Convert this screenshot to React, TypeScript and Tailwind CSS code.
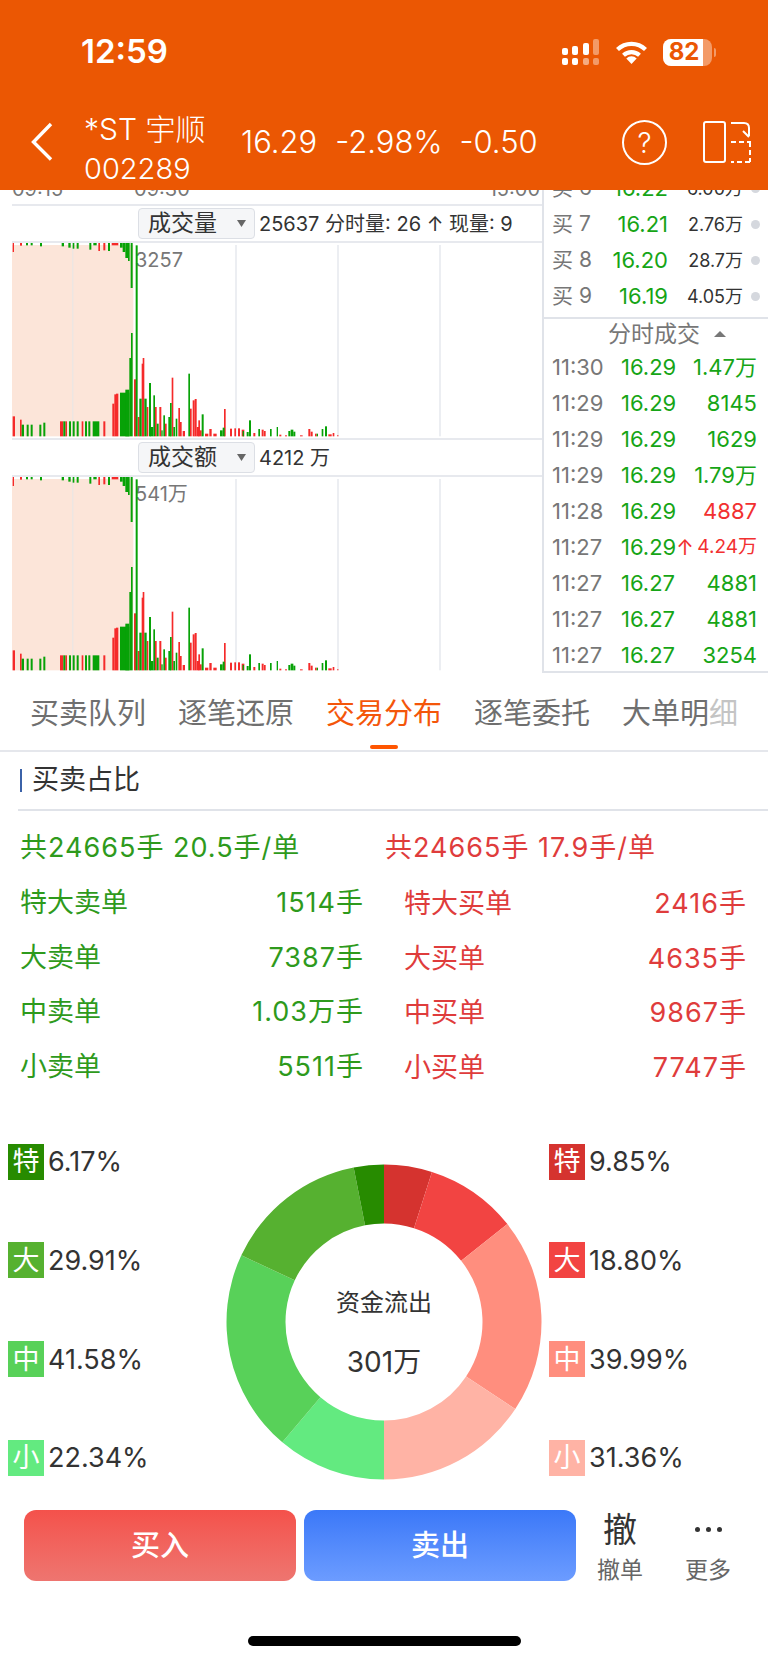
const GREEN = "text-[#16a516]";
const RED_BARS = [[38,7,678],[60,5,688],[180,10,693],[196,5,693],[245,5,693],[310,6,693],[337,6,640],[343,5,612],[348,7,610],[402,6,567],[413,6,680],[425,5,520],[428,5,503],[440,5,650],[465,5,650],[478,6,650],[495,5,700],[515,5,562],[535,5,653],[540,5,695],[548,7,722],[570,5,655],[578,6,630],[584,6,626],[590,8,710],[595,5,690],[600,5,720],[615,10,730],[628,7,716],[640,10,730],[672,5,656],[690,6,715],[703,5,714],[714,6,714],[725,8,718],[760,6,728],[785,6,718],[792,5,722],[838,6,733],[855,6,735],[900,8,735],[925,6,716],[932,6,724],[945,5,730],[985,10,732],[998,5,728],[1012,3,734]];
const GREEN_BARS = [[65,7,703],[80,6,703],[92,6,703],[118,6,703],[130,6,697],[190,6,693],[207,6,693],[218,6,693],[230,6,693],[255,6,693],[265,6,693],[278,20,693],[360,28,607],[376,12,598],[388,5,503],[393,5,428],[407,6,165],[418,7,625],[433,7,625],[447,6,578],[451,9,710],[460,5,615],[470,6,700],[484,4,720],[490,5,675],[505,7,680],[510,5,638],[520,5,710],[527,5,685],[565,5,550],[605,6,672],[660,8,720],[668,6,712],[728,4,722],[740,6,725],[747,6,690],[775,5,716],[810,5,716],[830,4,710],[865,6,722],[872,8,718],[880,6,724],[950,4,730],[965,5,716],[975,6,708]];
// hanging from the top of the chart: x, width, bottom
const TOP_RED = [[38,4,185],[60,6,166],[295,5,182],[310,6,180],[335,20,165]];
const TOP_GREEN = [[78,6,165],[92,6,165],[120,6,168],[185,7,168],[205,7,172],[218,5,175],[230,6,175],[268,6,178],[280,10,165],[324,6,182],[360,8,172],[368,8,185],[376,8,203],[384,5,212],[392,6,293]];

function VolumeChart({ label }: { label: string }) {
  return (
    <div className="relative h-[195px] w-[530px]">
      <span className="absolute left-[123px] top-[5px] text-[20px] leading-[24px] text-[#777]">{label}</span>
      <svg className="relative" width="530" height="195" viewBox="36 158 1590 585">
        <rect x="36" y="164" width="364" height="574" fill="#fce5d9" />
        <rect x="217" y="164" width="3" height="574" fill="#e6e6e6" />
        <rect x="706" y="164" width="4" height="574" fill="#e3e6ec" />
        <rect x="1012" y="164" width="4" height="574" fill="#e3e6ec" />
        <rect x="1318" y="164" width="4" height="574" fill="#e3e6ec" />
        {RED_BARS.map(([x, w, top]) => (
          <rect key={`r${x}`} x={x} y={top} width={w} height={738 - top} fill="#f52a2a" />
        ))}
        {GREEN_BARS.map(([x, w, top]) => (
          <rect key={`g${x}`} x={x} y={top} width={w} height={738 - top} fill="#07a207" />
        ))}
        {TOP_RED.map(([x, w, b]) => (
          <rect key={`tr${x}`} x={x} y={158} width={w} height={b - 158} fill="#f52a2a" />
        ))}
        {TOP_GREEN.map(([x, w, b]) => (
          <rect key={`tg${x}`} x={x} y={158} width={w} height={b - 158} fill="#07a207" />
        ))}
      </svg>
    </div>
  );
}

function ChartHeader({ title, children }: { title: string; children: React.ReactNode }) {
  return (
    <div className="flex h-[39px] items-center border-y-2 border-[#e7e9ee] pl-[126px]">
      <div className="flex h-[31px] w-[117px] items-center rounded border border-[#dcdfe5] bg-[#f5f6f8] pl-[9px] text-[23px] leading-none text-[#333]">
        {title}
        <svg width="9" height="7" viewBox="0 0 9 7" className="ml-[20px]" fill="#666">
          <path d="M0 0h9L4.5 7z" />
        </svg>
      </div>
      <span className="ml-[4px] whitespace-nowrap text-[20px] text-[#333]">{children}</span>
    </div>
  );
}

function OrderRow({ label, price, qty }: { label: string; price: string; qty: string }) {
  return (
    <div className="flex h-[36px] items-center pl-[8px] pr-[8px]">
      <span className="w-[58px] text-[21px] text-[#777]">{label}</span>
      <span className={`w-[58px] text-right text-[22px] ${GREEN}`}>{price}</span>
      <span className="flex-1 text-right text-[18px] text-[#333]">{qty}</span>
      <span className="ml-[8px] h-[9px] w-[9px] rounded-full bg-[#d5d8de]" />
    </div>
  );
}

function TradeRow({ time, price, qty, up }: { time: string; price: string; qty: string; up?: boolean }) {
  return (
    <div className="flex h-[36px] items-center pl-[8px] pr-[11px] text-[22px]">
      <span className="w-[69px] text-[#777]">{time}</span>
      <span className={GREEN}>{price}</span>
      {up && <span className="text-[21px] leading-none text-[#f23030]">↑</span>}
      <span className={`flex-1 whitespace-nowrap text-right ${up ? "text-[19px]" : ""} ${up || qty === "4887" ? "text-[#f23030]" : GREEN}`}>
        {qty}
      </span>
    </div>
  );
}

function StatRow({ left, leftVal, right, rightVal }: { left: string; leftVal: string; right: string; rightVal: string }) {
  return (
    <div className="flex h-[54.75px] items-center text-[27px]">
      <div className="ml-[20px] flex w-[344px] justify-between text-[#2e9a1c]">
        <span>{left}</span>
        <span className="tracking-[1px]">{leftVal}</span>
      </div>
      <div className="ml-[40px] mt-[2px] flex w-[343px] justify-between text-[#df3c3c]">
        <span>{right}</span>
        <span className="tracking-[1px]">{rightVal}</span>
      </div>
    </div>
  );
}

function LegendItem({ tag, value, color }: { tag: string; value: string; color: string }) {
  return (
    <div className="flex items-center">
      <span className={`flex h-[36px] w-[36px] items-center justify-center text-[27px] leading-none text-white ${color}`}>{tag}</span>
      <span className="ml-[4px] text-[27px] leading-none text-[#333]">{value}</span>
    </div>
  );
}

// donut wedge from a to b, degrees clockwise from 12 o'clock
function wedge(a: number, b: number) {
  const cx = 158, cy = 158, R = 157.5, r = 98.5;
  const p = (rad: number, deg: number) => {
    const t = (deg * Math.PI) / 180;
    return `${(cx + rad * Math.sin(t)).toFixed(2)} ${(cy - rad * Math.cos(t)).toFixed(2)}`;
  };
  const large = b - a > 180 ? 1 : 0;
  return `M${p(R, a)}A${R} ${R} 0 ${large} 1 ${p(R, b)}L${p(r, b)}A${r} ${r} 0 ${large} 0 ${p(r, a)}Z`;
}

const SLICES: [number, string][] = [
  [9.85, "#d5332f"], [18.8, "#f24442"], [39.99, "#ff8e7e"], [31.36, "#ffb3a5"],
  [22.34, "#63ea80"], [41.58, "#58d159"], [29.91, "#56b130"], [6.17, "#278b00"],
];

function Donut() {
  let angle = 0;
  return (
    <svg width="316" height="316" viewBox="0 0 316 316">
      {SLICES.map(([pct, fill]) => {
        const start = angle;
        angle += pct * 1.8;
        return <path key={fill} d={wedge(start, angle)} fill={fill} />;
      })}
    </svg>
  );
}

const TRADES = [
  ["11:30", "16.29", "1.47万"], ["11:29", "16.29", "8145"], ["11:29", "16.29", "1629"],
  ["11:29", "16.29", "1.79万"], ["11:28", "16.29", "4887"],
];
const TRADES_AFTER = [["11:27", "16.27", "4881"], ["11:27", "16.27", "4881"], ["11:27", "16.27", "3254"]];

export default function App() {
  return (
    <div className="h-[1663px] w-[768px] overflow-hidden bg-white font-['Inter','Noto_Sans_CJK_SC',sans-serif]">
      {/* Header */}
      <header className="relative z-10 h-[190px] bg-[#eb5703] text-white">
        <div className="flex h-[104px] pt-[32px]">
          <span className="ml-[81px] text-[33px] font-semibold leading-[38px]">12:59</span>
          <div className="ml-auto mr-[52px] flex h-[38px] items-center pt-[2px]">
            <svg width="38" height="27" viewBox="0 0 38 27" fill="#fff" className="mt-[1px]">
              <rect x="0" y="9" width="6" height="7" rx="2" />
              <rect x="10" y="7" width="6" height="9" rx="2" />
              <rect x="21" y="4" width="6" height="12" rx="2" />
              <rect x="31" y="0" width="6" height="16" rx="2" opacity=".4" />
              <rect x="0" y="19" width="6" height="7" rx="2" />
              <rect x="10" y="19" width="6" height="7" rx="2" />
              <rect x="21" y="19" width="6" height="7" rx="2" opacity=".5" />
              <rect x="31" y="19" width="6" height="7" rx="2" opacity=".4" />
            </svg>
            <svg width="33" height="24" viewBox="0 0 33 24" className="ml-[15px]">
              <path d="M2.5 9.5a20 20 0 0 1 28 0" fill="none" stroke="#fff" strokeWidth="4.2" />
              <path d="M8.5 15.2a11.8 11.8 0 0 1 16 0" fill="none" stroke="#fff" strokeWidth="4.2" />
              <path d="M16.5 24l-5.2-5.6a7.4 7.4 0 0 1 10.4 0z" fill="#fff" />
            </svg>
            <div className="relative ml-[15px] h-[27px] w-[49px] overflow-hidden rounded-[8px] bg-white/40">
              <div className="flex h-full w-[40px] items-center justify-center bg-white pl-[2px] text-[24px] font-bold leading-none text-[#eb5703]">82</div>
            </div>
            <div className="ml-[2px] h-[9px] w-[2px] rounded-r bg-white/40" />
          </div>
        </div>
        <div className="flex h-[86px]">
          <svg width="24" height="40" viewBox="0 0 24 40" className="ml-[30px] mt-[18px]" fill="none" stroke="#fff" strokeWidth="3.4">
            <path d="M21 2L3.5 20 21 37.5" />
          </svg>
          <div className="ml-[30px] w-[157px] pt-[5px] font-light leading-[40px]">
            <div className="whitespace-nowrap text-[30px]">*ST 宇顺</div>
            <div className="text-[29px]">002289</div>
          </div>
          <div className="flex h-[76px] items-center text-[31px] font-light">
            <span>16.29</span>
            <span className="ml-[18px]">-2.98%</span>
            <span className="ml-[17px]">-0.50</span>
          </div>
          <div className="ml-auto mr-[36px] mt-[16px] flex h-[45px] w-[45px] items-center justify-center rounded-full border-2 border-white text-[28px] font-light leading-none">?</div>
          <svg width="48" height="44" viewBox="0 0 48 44" className="mr-[17px] mt-[16px]" fill="none" stroke="#fff" strokeWidth="2">
            <rect x="1" y="2" width="21" height="40" rx="2" />
            <path d="M28 22h20M47 22v20M47 42H28" strokeDasharray="5 3" />
            <path d="M28 3h13q5 0 5 5v8M40 11l6 6" />
          </svg>
        </div>
      </header>

      {/* Charts and quotes */}
      <div className="flex h-[483px] overflow-hidden">
        <div className="w-[542px] pl-3">
          <div className="flex h-[14px] items-end overflow-hidden pb-[3px] text-[20px] leading-[24px] text-[#777]">
            <span>09:15</span>
            <span className="ml-[71px]">09:30</span>
            <span className="ml-auto mr-[2px]">15:00</span>
          </div>
          <ChartHeader title="成交量">25637 分时量: 26 ↑ 现量: 9</ChartHeader>
          <VolumeChart label="3257" />
          <ChartHeader title="成交额">4212 万</ChartHeader>
          <VolumeChart label="541万" />
        </div>
        <div className="h-full flex-1 overflow-hidden border-b-2 border-l-2 border-[#e0e3e9]">
          <div className="-mt-[20px]">
            <OrderRow label="买 6" price="16.22" qty="6.00万" />
            <OrderRow label="买 7" price="16.21" qty="2.76万" />
            <OrderRow label="买 8" price="16.20" qty="28.7万" />
            <OrderRow label="买 9" price="16.19" qty="4.05万" />
          </div>
          <div className="mt-[3px] flex h-[32px] items-center border-t-2 border-[#e0e3e9] pl-[64px] text-[23px] text-[#777]">
            分时成交
            <svg width="12" height="6" viewBox="0 0 12 6" className="ml-[14px]" fill="#777">
              <path d="M0 6L6 0l6 6z" />
            </svg>
          </div>
          {TRADES.map(([t, p, q], i) => (
            <TradeRow key={i} time={t} price={p} qty={q} />
          ))}
          <TradeRow time="11:27" price="16.29" qty="4.24万" up />
          {TRADES_AFTER.map(([t, p, q], i) => (
            <TradeRow key={i} time={t} price={p} qty={q} />
          ))}
        </div>
      </div>

      {/* Tabs */}
      <div className="flex h-[79px] gap-[32px] border-b-2 border-[#e5e7ec] pl-[30px] text-[29px] leading-[30px] text-[#6f6f6f]">
        <span className="whitespace-nowrap pt-[26px]">买卖队列</span>
        <span className="whitespace-nowrap pt-[26px]">逐笔还原</span>
        <div className="flex flex-col items-center pt-[26px] text-[#f4560a]">
          <span className="whitespace-nowrap">交易分布</span>
          <span className="mt-[16px] h-[4px] w-[28px] rounded-full bg-[#ff5500]" />
        </div>
        <span className="whitespace-nowrap pt-[26px]">逐笔委托</span>
        <span className="whitespace-nowrap pt-[26px]">
          大单明<span className="text-[#c4c4c4]">细</span>
        </span>
      </div>

      <div className="ml-[18px] flex h-[59px] items-center border-b-2 border-[#e0e3e9]">
        <span className="ml-[2px] h-[23px] w-[2px] bg-[#3b62a8]" />
        <span className="ml-[10px] text-[27px] text-[#333]">买卖占比</span>
      </div>

      {/* Totals */}
      <div className="pt-[10px]">
        <div className="flex h-[54.75px] items-center whitespace-nowrap text-[27px] tracking-[1px]">
          <span className="ml-[20px] w-[365px] text-[#2e9a1c]">共24665手 20.5手/单</span>
          <span className="text-[#df3c3c]">共24665手 17.9手/单</span>
        </div>
        <StatRow left="特大卖单" leftVal="1514手" right="特大买单" rightVal="2416手" />
        <StatRow left="大卖单" leftVal="7387手" right="大买单" rightVal="4635手" />
        <StatRow left="中卖单" leftVal="1.03万手" right="中买单" rightVal="9867手" />
        <StatRow left="小卖单" leftVal="5511手" right="小买单" rightVal="7747手" />
      </div>

      {/* Donut */}
      <div className="mt-[49px] flex h-[336px]">
        <div className="ml-2 flex h-[332px] w-[218px] flex-col justify-between">
          <LegendItem tag="特" value="6.17%" color="bg-[#278b00]" />
          <LegendItem tag="大" value="29.91%" color="bg-[#56b130]" />
          <LegendItem tag="中" value="41.58%" color="bg-[#58d159]" />
          <LegendItem tag="小" value="22.34%" color="bg-[#63ea80]" />
        </div>
        <div className="relative mt-[20px] h-[316px] w-[316px]">
          <Donut />
          <div className="absolute left-0 top-[124px] w-full text-center text-[24px] leading-[30px] text-[#333]">资金流出</div>
          <div className="absolute left-0 top-[180px] w-full text-center text-[28px] leading-[36px] text-[#333]">301万</div>
        </div>
        <div className="ml-[7px] flex h-[332px] flex-col justify-between">
          <LegendItem tag="特" value="9.85%" color="bg-[#d5332f]" />
          <LegendItem tag="大" value="18.80%" color="bg-[#f24442]" />
          <LegendItem tag="中" value="39.99%" color="bg-[#ff8e7e]" />
          <LegendItem tag="小" value="31.36%" color="bg-[#ffb3a5]" />
        </div>
      </div>

      {/* Bottom actions */}
      <div className="mt-[30px] flex h-[80px] items-start pl-[24px]">
        <button className="flex h-[71px] w-[272px] items-center justify-center rounded-xl bg-gradient-to-b from-[#f4514b] to-[#ee7570] text-[29px] font-medium text-white">买入</button>
        <button className="ml-[8px] flex h-[71px] w-[272px] items-center justify-center rounded-xl bg-gradient-to-b from-[#3b78f8] to-[#6c9cff] text-[29px] font-medium text-white">卖出</button>
        <div className="flex w-[88px] flex-col items-center">
          <span className="text-[34px] leading-[40px] text-[#333]">撤</span>
          <span className="text-[23px] leading-[40px] text-[#666]">撤单</span>
        </div>
        <div className="flex w-[88px] flex-col items-center">
          <div className="flex h-[40px] items-center gap-[6px]">
            <span className="h-[5px] w-[5px] rounded-full bg-[#333]" />
            <span className="h-[5px] w-[5px] rounded-full bg-[#333]" />
            <span className="h-[5px] w-[5px] rounded-full bg-[#333]" />
          </div>
          <span className="text-[23px] leading-[40px] text-[#666]">更多</span>
        </div>
      </div>
      <div className="mx-auto mt-[46px] h-[10px] w-[273px] rounded-full bg-black" />
    </div>
  );
}
